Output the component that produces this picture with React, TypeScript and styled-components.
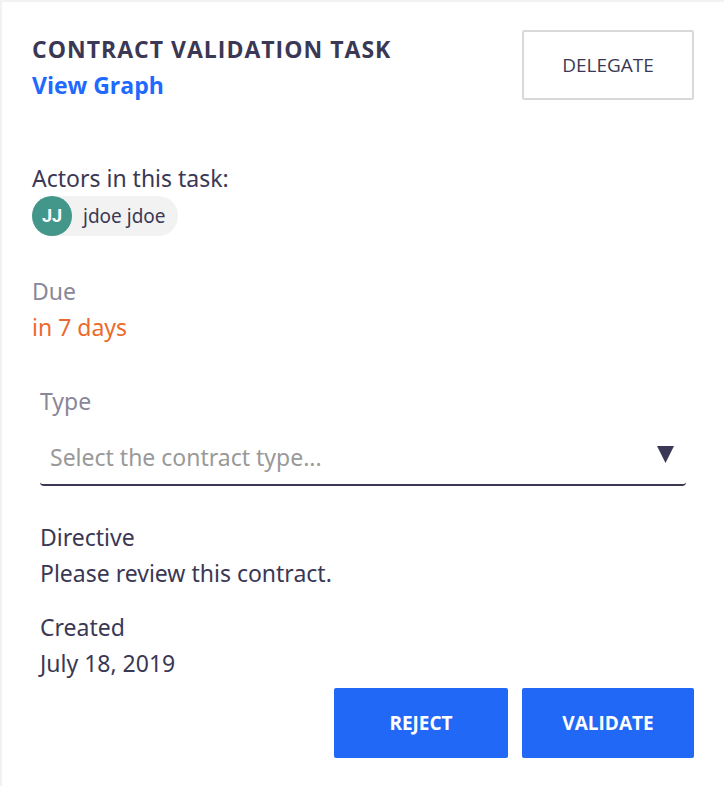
import React from 'react';
import styled, { createGlobalStyle } from 'styled-components';

const GlobalStyle = createGlobalStyle`
  *, *::before, *::after { box-sizing: border-box; }
  body {
    margin: 0;
    background: #fff;
    color: #3a3854;
    font: 400 23px/36px 'Noto Sans', 'Open Sans', sans-serif;
  }
`;

const Card = styled.main`
  min-height: 100vh;
  padding: 28px 30px;
  border: solid #f2f2f2;
  border-width: 2px 0 0 2px;
`;

const Header = styled.header`
  display: flex;
  justify-content: space-between;
  align-items: flex-start;
`;

const Heading = styled.div`
  padding-top: 1px;
  font-family: 'Open Sans', sans-serif;
  font-weight: 700;
`;

const Title = styled.h1`
  margin: 0;
  font-size: 23px;
  line-height: 36px;
  letter-spacing: 1px;
  text-transform: uppercase;
`;

const GraphLink = styled.a`
  color: #1f69ff;
  text-decoration: none;
`;

const Button = styled.button<{ $primary?: boolean; $minWidth?: number }>`
  height: 70px;
  min-width: ${p => p.$minWidth ?? 172}px;
  padding: 0 38px;
  border: ${p => (p.$primary ? '0' : '2px solid #d9d9d9')};
  border-radius: 2px;
  background: ${p => (p.$primary ? '#2268f7' : '#fff')};
  color: ${p => (p.$primary ? '#fff' : '#3a3854')};
  font: ${p => (p.$primary ? 700 : 400)} 19px/24px 'Open Sans', sans-serif;
  text-transform: uppercase;
  cursor: pointer;
`;

const Section = styled.section<{ $gap: number; $inset?: boolean }>`
  margin-top: ${p => p.$gap}px;
  padding: 0 ${p => (p.$inset ? 8 : 0)}px;
`;

const Line = styled.div<{ $tone?: 'muted' | 'warning' }>`
  color: ${p => (p.$tone === 'muted' ? '#898798' : p.$tone === 'warning' ? '#ec6a2d' : 'inherit')};
`;

const UserTag = styled.div`
  display: inline-flex;
  align-items: center;
  height: 40px;
  padding-right: 12px;
  border-radius: 20px;
  background: #f2f2f2;
  font-size: 19px;
  vertical-align: top;
`;

const Avatar = styled.span`
  display: grid;
  place-items: center;
  width: 40px;
  height: 40px;
  margin-right: 11px;
  border-radius: 50%;
  background: #43968a;
  color: #fff;
  font: 700 18px/24px Roboto, sans-serif;
`;

const FieldLabel = styled.label`
  display: block;
  color: #898798;
`;

const SelectBox = styled.div`
  display: grid;
  align-items: center;
  margin-top: 11px;

  > * { grid-area: 1 / 1; }
`;

const Select = styled.select`
  appearance: none;
  width: 100%;
  height: 56px;
  padding: 0 48px 0 10px;
  border: 0;
  border-bottom: 2px solid #3a3854;
  border-radius: 4px;
  background: transparent;
  color: #999;
  font: inherit;
`;

const Arrow = styled.svg`
  justify-self: end;
  width: 17px;
  height: 17px;
  margin: 0 12px 8px 0;
  pointer-events: none;
`;

const Actions = styled.footer`
  display: flex;
  flex-wrap: wrap;
  justify-content: flex-end;
  gap: 14px;
  margin-top: 7px;
`;

export default function App() {
  return (
    <>
      <GlobalStyle />
      <Card>
        <Header>
          <Heading>
            <Title>Contract validation task</Title>
            <GraphLink href="#graph">View Graph</GraphLink>
          </Heading>
          <Button type="button">Delegate</Button>
        </Header>

        <Section $gap={57}>
          <Line>Actors in this task:</Line>
          <UserTag><Avatar>JJ</Avatar>jdoe jdoe</UserTag>
        </Section>

        <Section $gap={37}>
          <Line $tone="muted">Due</Line>
          <Line $tone="warning">in 7 days</Line>
        </Section>

        <Section $gap={38} $inset>
          <FieldLabel htmlFor="contract-type">Type</FieldLabel>
          <SelectBox>
            <Select id="contract-type" defaultValue="">
              <option value="">Select the contract type...</option>
            </Select>
            <Arrow viewBox="0 0 17 17" aria-hidden="true"><path d="M0 0H17L8.5 17Z" fill="#3a3854" /></Arrow>
          </SelectBox>
        </Section>

        <Section $gap={33} $inset>
          <Line>Directive</Line>
          <Line>Please review this contract.</Line>
        </Section>

        <Section $gap={18} $inset>
          <Line>Created</Line>
          <Line>July 18, 2019</Line>
        </Section>

        <Actions>
          <Button type="button" $primary $minWidth={174}>Reject</Button>
          <Button type="button" $primary>Validate</Button>
        </Actions>
      </Card>
    </>
  );
}
